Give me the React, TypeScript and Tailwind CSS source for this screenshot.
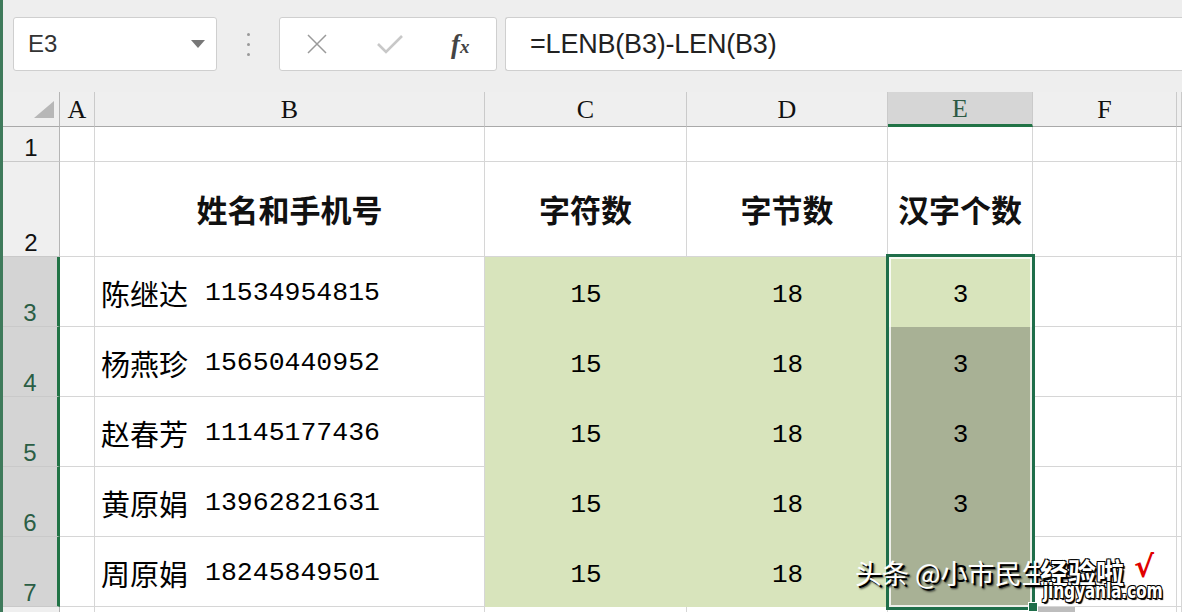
import React from 'react';

const cjk = "font-['Noto_Sans_CJK_SC',sans-serif]";
const mono = "font-['Liberation_Mono',monospace]";

interface Row {
  name: string;
  phone: string;
}

const rows: Row[] = [
  { name: '陈继达', phone: '11534954815' },
  { name: '杨燕珍', phone: '15650440952' },
  { name: '赵春芳', phone: '11145177436' },
  { name: '黄原娟', phone: '13962821631' },
  { name: '周原娟', phone: '18245849501' },
];

function Toolbar() {
  return (
    <div className="h-[92px] flex items-start pt-[17px] pl-[10px]">
      {/* name box */}
      <div className="w-[204px] h-[54px] bg-white border border-[#cfcfcf] rounded-[3px] flex items-center justify-between pl-[14px] pr-[11px]">
        <span className="font-['Liberation_Sans',sans-serif] text-[24px] text-[#333]">E3</span>
        <svg width="14" height="8" viewBox="0 0 14 8">
          <path d="M0 0 L14 0 L7 8 Z" fill="#777" />
        </svg>
      </div>
      {/* dots */}
      <div className="w-[62px] h-[54px] flex flex-col items-center justify-center gap-[7px]">
        <span className="w-[3px] h-[3px] rounded-full bg-[#999]" />
        <span className="w-[3px] h-[3px] rounded-full bg-[#999]" />
        <span className="w-[3px] h-[3px] rounded-full bg-[#999]" />
      </div>
      {/* fx box */}
      <div className="w-[218px] h-[54px] bg-white border border-[#cfcfcf] rounded-[3px] flex items-center pl-[26px]">
        <svg width="22" height="20" viewBox="0 0 22 20">
          <path d="M2 1 L20 19 M20 1 L2 19" stroke="#9a9a9a" strokeWidth="1.5" fill="none" />
        </svg>
        <svg className="ml-[49px]" width="26" height="20" viewBox="0 0 26 20">
          <path d="M1 10 L9 18 L25 2" stroke="#c8c8c8" strokeWidth="2.6" fill="none" />
        </svg>
        <span className="ml-[48px] font-['Liberation_Serif',serif] italic font-bold text-[27px] text-[#444] leading-none">
          f<span className="text-[19px]">x</span>
        </span>
      </div>
      {/* formula */}
      <div className="ml-[8px] flex-1 h-[54px] bg-white border-y border-l border-[#cfcfcf] rounded-l-[3px] flex items-center pl-[24px]">
        <span className="font-['Liberation_Sans',sans-serif] text-[27px] text-[#222] tracking-[-0.2px]">
          =LENB(B3)-LEN(B3)
        </span>
      </div>
    </div>
  );
}

function ColHead({ label, selected }: { label: string; selected?: boolean }) {
  return (
    <div
      className={`flex items-center justify-center font-['Liberation_Serif',serif] text-[26px] border-r border-[#cacaca] ${
        selected
          ? 'bg-[#d6d6d6] border-b-[3px] border-b-[#217346] text-[#2d5a44]'
          : 'bg-[#efefef] border-b border-b-[#a9a9a9] text-[#111]'
      }`}
    >
      {label}
    </div>
  );
}

function RowHead({ n, selected }: { n: number; selected?: boolean }) {
  return (
    <div
      className={`flex items-end justify-center pb-[1px] leading-none font-['Liberation_Sans',sans-serif] text-[24px] border-b border-[#c9c9c9] ${
        selected
          ? 'bg-[#d4d4d4] border-r-[3px] border-r-[#217346] text-[#2b5e45]'
          : 'bg-[#efefef] border-r border-r-[#b5b5b5] text-[#111]'
      }`}
    >
      {n}
    </div>
  );
}

function Cell({ children, className = '' }: { children?: React.ReactNode; className?: string }) {
  return <div className={`border-r border-b border-[#d6d6d6] bg-white ${className}`}>{children}</div>;
}

function GreenCell({ children, shaded }: { children?: React.ReactNode; shaded?: boolean }) {
  return (
    <div
      className={`flex items-center justify-center pt-[6px] ${mono} text-[26px] text-[#000] ${
        shaded ? 'bg-[#a8b195]' : 'bg-[#d8e4bc]'
      }`}
    >
      {children}
    </div>
  );
}

const outline =
  '[text-shadow:1px_1px_0_#000,-1px_-1px_0_#000,1px_-1px_0_#000,-1px_1px_0_#000,2px_2px_1px_#000]';

export default function App() {
  return (
    <div className="relative w-[1182px] h-[612px] overflow-hidden bg-[#eeeeee] border-l-[3px] border-[#3f7a5b]">
      <Toolbar />

      <div className="grid grid-cols-[57px_35px_390px_202px_201px_145px_144px_1fr] grid-rows-[35px_35px_95px_70px_70px_70px_70px_70px_20px]">
        {/* header row */}
        <div className="bg-[#efefef] border-r border-r-[#b5b5b5] border-b border-b-[#a9a9a9] flex items-end justify-end pr-[5px] pb-[8px]">
          <svg width="20" height="17" viewBox="0 0 20 17">
            <path d="M20 0 L20 17 L0 17 Z" fill="#b7b7b7" />
          </svg>
        </div>
        <ColHead label="A" />
        <ColHead label="B" />
        <ColHead label="C" />
        <ColHead label="D" />
        <ColHead label="E" selected />
        <ColHead label="F" />
        <ColHead label="" />

        {/* row 1 */}
        <RowHead n={1} />
        <Cell />
        <Cell />
        <Cell />
        <Cell />
        <Cell />
        <Cell />
        <Cell />

        {/* row 2 */}
        <RowHead n={2} />
        <Cell />
        <Cell className={`flex items-center justify-center ${cjk} font-bold text-[31px] text-[#111]`}>姓名和手机号</Cell>
        <Cell className={`flex items-center justify-center ${cjk} font-bold text-[31px] text-[#111]`}>字符数</Cell>
        <Cell className={`flex items-center justify-center ${cjk} font-bold text-[31px] text-[#111]`}>字节数</Cell>
        <Cell className={`flex items-center justify-center ${cjk} font-bold text-[31px] text-[#111]`}>汉字个数</Cell>
        <Cell />
        <Cell />

        {rows.map((r, i) => (
          <React.Fragment key={r.phone}>
            <RowHead n={i + 3} selected />
            <Cell />
            <Cell className="flex items-center pl-[6px] pt-[5px] text-[#000]">
              <span className={`${cjk} text-[29px]`}>{r.name}</span>
              <span className={`${mono} text-[26.5px] ml-[17px]`}>{r.phone}</span>
            </Cell>
            <GreenCell>15</GreenCell>
            <GreenCell>18</GreenCell>
            <GreenCell shaded={i > 0}>3</GreenCell>
            <Cell />
            <Cell />
          </React.Fragment>
        ))}

        {/* row 8 partial */}
        <div className="bg-[#efefef] border-r border-r-[#b5b5b5]" />
        <Cell />
        <Cell />
        <Cell />
        <Cell />
        <Cell />
        <Cell />
        <Cell />
      </div>

      {/* selection border */}
      <div className="absolute left-[883px] top-[254px] w-[149px] h-[356px] border-[3px] border-[#1f6e4a] pointer-events-none">
        <div className="w-full h-full border-[2px] border-white/80" />
      </div>
      {/* fill handle */}
      <div className="absolute left-[1025px] top-[602px] w-[10px] h-[10px] bg-[#1f6e4a] border border-white" />
      <div className="absolute left-[1035px] top-[607px] w-[37px] h-[5px] bg-[#bdbdbd]" />

      {/* watermarks */}
      <div
        className={`absolute left-[852px] top-[553px] ${cjk} text-[27px] text-white whitespace-nowrap [text-shadow:2px_2px_0_#000,3px_3px_2px_rgba(0,0,0,0.7)]`}
      >
        头条 @小市民生活
      </div>
      <div className="absolute left-[1037px] top-[552px] flex items-start">
        <span className={`${cjk} font-bold text-[28px] text-white leading-none mt-[6px] ${outline}`}>经验啦</span>
        <span className="ml-[10px] font-['DejaVu_Sans',sans-serif] font-bold text-[30px] text-[#e00000] leading-none [text-shadow:1px_1px_0_#fff,-1px_-1px_0_#fff]">
          √
        </span>
      </div>
      <div
        className={`absolute left-[1040px] top-[581px] origin-left scale-x-[0.74] whitespace-nowrap font-['DejaVu_Sans',sans-serif] font-bold text-[21px] text-white tracking-[-0.3px] leading-none ${outline}`}
      >
        jingyanla.com
      </div>
    </div>
  );
}
